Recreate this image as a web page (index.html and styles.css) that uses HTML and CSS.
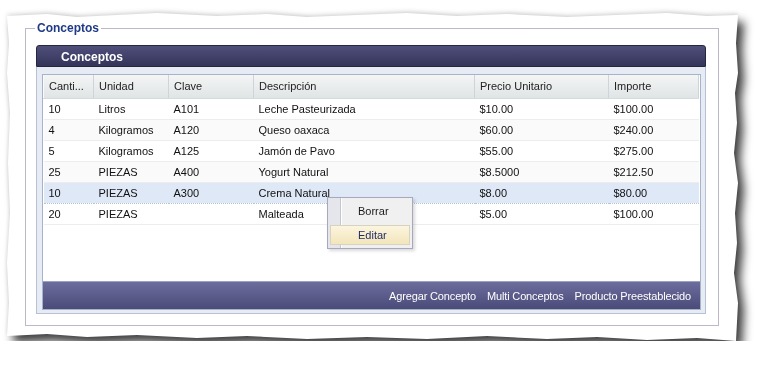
FILE: index.html
```html
<!DOCTYPE html>
<html lang="es">
<head>
    <meta charset="UTF-8">
    <title>Conceptos</title>
    <link rel="stylesheet" href="styles.css">
</head>
<body>
    <div class="sheet">
        <div class="paper">
            <fieldset class="group">
                <legend>Conceptos</legend>
                <div class="panel">
                    <div class="panel-header">Conceptos</div>
                    <div class="panel-body">
                        <div class="grid">
                            <div class="grid-scroll">
                                <table class="grid-table">
                                    <colgroup>
                                        <col class="c-cant">
                                        <col class="c-unidad">
                                        <col class="c-clave">
                                        <col class="c-desc">
                                        <col class="c-precio">
                                        <col class="c-importe">
                                    </colgroup>
                                    <thead>
                                        <tr>
                                            <th>Canti...</th>
                                            <th>Unidad</th>
                                            <th>Clave</th>
                                            <th>Descripción</th>
                                            <th>Precio Unitario</th>
                                            <th>Importe</th>
                                        </tr>
                                    </thead>
                                    <tbody>
                                        <tr>
                                            <td>10</td><td>Litros</td><td>A101</td><td>Leche Pasteurizada</td><td>$10.00</td><td>$100.00</td>
                                        </tr>
                                        <tr class="alt">
                                            <td>4</td><td>Kilogramos</td><td>A120</td><td>Queso oaxaca</td><td>$60.00</td><td>$240.00</td>
                                        </tr>
                                        <tr>
                                            <td>5</td><td>Kilogramos</td><td>A125</td><td>Jamón de Pavo</td><td>$55.00</td><td>$275.00</td>
                                        </tr>
                                        <tr class="alt">
                                            <td>25</td><td>PIEZAS</td><td>A400</td><td>Yogurt Natural</td><td>$8.5000</td><td>$212.50</td>
                                        </tr>
                                        <tr class="selected">
                                            <td>10</td><td>PIEZAS</td><td>A300</td><td>Crema Natural</td><td>$8.00</td><td>$80.00</td>
                                        </tr>
                                        <tr>
                                            <td>20</td><td>PIEZAS</td><td></td><td>Malteada</td><td>$5.00</td><td>$100.00</td>
                                        </tr>
                                    </tbody>
                                </table>
                            </div>
                            <div class="grid-toolbar">
                                <span class="tool">Agregar Concepto</span>
                                <span class="tool">Multi Conceptos</span>
                                <span class="tool">Producto Preestablecido</span>
                            </div>
                            <div class="context-menu">
                                <div class="menu-item">Borrar</div>
                                <div class="menu-item active">Editar</div>
                            </div>
                        </div>
                    </div>
                </div>
            </fieldset>
        </div>
    </div>
</body>
</html>
```

FILE: styles.css
```css
* {
    margin: 0;
    padding: 0;
    box-sizing: border-box;
}

body {
    font-family: 'Liberation Sans', Arial, sans-serif;
    font-size: 11px;
    background-color: #fff;
    color: #111;
}

/* torn paper sheet */
.sheet {
    width: 731px;
    height: 328px;
    margin: 13px 0 0 7px;
    filter: drop-shadow(0 -2px 2px rgba(0, 0, 0, 0.12)) drop-shadow(6px 7px 5px rgba(0, 0, 0, 0.75));
}

.paper {
    width: 100%;
    height: 100%;
    background-color: #fff;
    padding: 8px 0 0 18px;
    clip-path: polygon(
        0 3px, 40px 1px, 70px 4px, 110px 2px, 150px 0, 210px 3px, 260px 1px, 300px 4px,
        350px 2px, 400px 0, 450px 3px, 500px 1px, 560px 4px, 610px 2px, 660px 0, 700px 3px,
        731px 2px,
        729px 30px, 731px 60px, 728px 80px, 730px 110px, 727px 140px, 731px 170px,
        728px 200px, 730px 230px, 727px 260px, 731px 290px, 729px 328px,
        690px 325px, 640px 327px, 590px 324px, 540px 326px, 480px 323px, 420px 326px,
        360px 324px, 300px 326px, 240px 323px, 190px 325px, 130px 322px, 80px 324px,
        40px 321px, 0 323px,
        2px 290px, 0 250px, 3px 200px, 1px 150px, 3px 100px, 0 60px, 2px 30px
    );
}

/* fieldset */
.group {
    width: 694px;
    height: 305px;
    border: 1px solid #b9b9c9;
    padding: 10px 11px 0 10px;
}

.group legend {
    margin-left: -1px;
    padding: 0 2px 0 2px;
    font-size: 12px;
    font-weight: bold;
    color: #1f3b87;
    line-height: 14px;
}

/* panel */
.panel {
    width: 670px;
    height: 269px;
    display: flex;
    flex-direction: column;
}

.panel-header {
    height: 22px;
    padding-left: 24px;
    line-height: 22px;
    font-size: 12px;
    font-weight: bold;
    color: #fff;
    background: linear-gradient(#4f4f7b, #34345a);
    border: 1px solid #26263f;
    border-radius: 3px 3px 0 0;
}

.panel-body {
    flex: 1;
    background-color: #e6ebf4;
    border: 1px solid #b7c1d4;
    border-top: none;
    padding: 7px 4px 3px 5px;
    display: flex;
}

.grid {
    flex: 1;
    position: relative;
    display: flex;
    flex-direction: column;
    background-color: #fff;
    border: 1px solid #a5b4ca;
}

.grid-scroll {
    flex: 1;
}

.grid-table {
    width: 655px;
    table-layout: fixed;
    border-collapse: collapse;
}

.c-cant { width: 50px; }
.c-unidad { width: 75px; }
.c-clave { width: 85px; }
.c-desc { width: 221px; }
.c-precio { width: 134px; }
.c-importe { width: 90px; }

th {
    height: 23px;
    padding: 0 5px;
    text-align: left;
    font-weight: normal;
    color: #222;
    white-space: nowrap;
    overflow: hidden;
    background: linear-gradient(#f4f5f5, #dfe4e4);
    border-right: 1px solid #cfd4d8;
    border-left: 1px solid #fbfbfb;
    border-bottom: 1px solid #d6dadd;
}

td {
    height: 21px;
    padding: 0 5px;
    white-space: nowrap;
    overflow: hidden;
    border-bottom: 1px solid #ededed;
}

tr.alt td {
    background-color: #fafafa;
}

tr.selected td {
    background-color: #dfe8f6;
    border-top: 1px dotted #b8c4d6;
    border-bottom: 1px dotted #b8c4d6;
}

/* bottom toolbar */
.grid-toolbar {
    height: 28px;
    display: flex;
    justify-content: flex-end;
    align-items: center;
    gap: 11px;
    padding-right: 9px;
    background: linear-gradient(#6d6d9d, #4b4b7a);
    border-top: 1px solid #9aa3c4;
    color: #fff;
    font-size: 11px;
    letter-spacing: -0.15px;
}

/* context menu */
.context-menu {
    position: absolute;
    left: 284px;
    top: 122px;
    width: 86px;
    height: 52px;
    padding: 3px 2px;
    background: linear-gradient(to right, #e5e5ec 12px, #c5c5d2 12px, #c5c5d2 13px, #fff 13px, #fff 14px, #f0f0f0 14px);
    border: 1px solid #a8a8bc;
    box-shadow: 2px 2px 3px rgba(0, 0, 0, 0.15);
    display: flex;
    flex-direction: column;
    gap: 4px;
}

.menu-item {
    height: 20px;
    line-height: 18px;
    padding-left: 27px;
    color: #1a1a1a;
    border: 1px solid transparent;
}

.menu-item.active {
    color: #1f2d66;
    background: linear-gradient(#fcf5df, #f3e5bb);
    border-color: #d8d3c0;
}
```
